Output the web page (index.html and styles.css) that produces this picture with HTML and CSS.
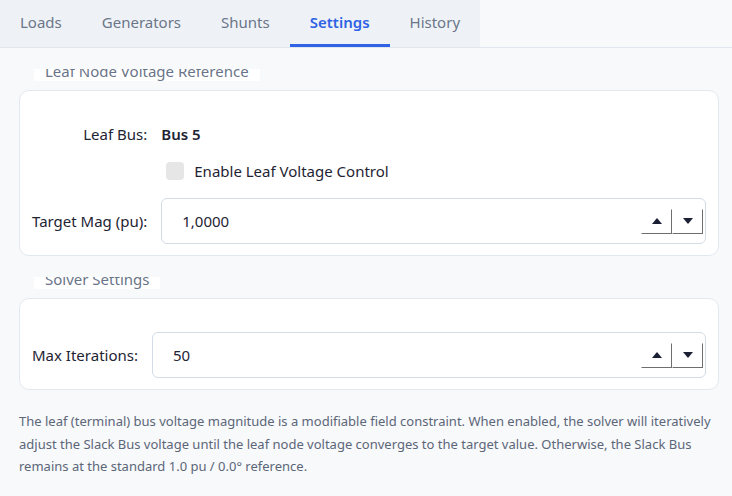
FILE: index.html
```html
<!DOCTYPE html>
<html lang="en">
<head>
    <meta charset="UTF-8">
    <title>Settings</title>
    <link rel="stylesheet" href="styles.css">
</head>
<body>
<div class="tabs-bar">
    <nav class="tabs">
        <a class="tab">Loads</a>
        <a class="tab">Generators</a>
        <a class="tab">Shunts</a>
        <a class="tab current">Settings</a>
        <a class="tab">History</a>
    </nav>
</div>

<div class="content">
    <section class="group">
        <div class="legend"><span>Leaf Node Voltage Reference</span></div>
        <div class="card">
            <div class="form-grid">
                <span class="label">Leaf Bus:</span>
                <strong class="value">Bus 5</strong>

                <span></span>
                <label class="check"><span class="box"></span>Enable Leaf Voltage Control</label>

                <span class="label">Target Mag (pu):</span>
                <div class="num-input">
                    <span class="num">1,0000</span>
                    <div class="spin">
                        <span class="btn"><svg width="10" height="6" viewBox="0 0 10 6"><polygon points="5,0 10,6 0,6"/></svg></span>
                        <span class="btn"><svg width="10" height="6" viewBox="0 0 10 6"><polygon points="0,0 10,0 5,6"/></svg></span>
                    </div>
                </div>
            </div>
        </div>
    </section>

    <section class="group">
        <div class="legend"><span>Solver Settings</span></div>
        <div class="card">
            <div class="form-grid">
                <span class="label">Max Iterations:</span>
                <div class="num-input">
                    <span class="num">50</span>
                    <div class="spin">
                        <span class="btn"><svg width="10" height="6" viewBox="0 0 10 6"><polygon points="5,0 10,6 0,6"/></svg></span>
                        <span class="btn"><svg width="10" height="6" viewBox="0 0 10 6"><polygon points="0,0 10,0 5,6"/></svg></span>
                    </div>
                </div>
            </div>
        </div>
    </section>

    <p class="note">The leaf (terminal) bus voltage magnitude is a modifiable field constraint. When enabled, the solver will iteratively adjust the Slack Bus voltage until the leaf node voltage converges to the target value. Otherwise, the Slack Bus remains at the standard 1.0 pu / 0.0° reference.</p>
</div>
</body>
</html>
```

FILE: styles.css
```css
*{
    margin: 0;
    padding: 0;
    box-sizing: border-box;
}
body{
    background-color: #f7f9fb;
    font-family: "Noto Sans", "Open Sans", sans-serif;
    color: #1e2433;
    width: 732px;
    height: 496px;
    overflow: hidden;
}
/* 顶部标签栏 */
.tabs-bar{
    border-bottom: 1px solid #e1e7ef;
}
.tabs{
    display: inline-flex;
    background-color: #eef2f7;
    height: 47px;
}
.tab{
    display: flex;
    align-items: center;
    padding: 0 20px;
    font-size: 15px;
    color: #6b7689;
    border-bottom: 3px solid transparent;
}
.tab.current{
    color: #2f62e4;
    font-weight: 600;
    border-bottom-color: #2f62e4;
}

.content{
    padding: 21px 13px 0 19px;
}
.group{
    display: flex;
    flex-direction: column;
    margin-bottom: 21px;
}
/* 图例只露出下半截，和原图一样 */
.legend{
    align-self: flex-start;
    margin-left: 15px;
    height: 12px;
    line-height: 4px;
    overflow: hidden;
    background-color: #ffffff;
    padding: 0 11px;
    font-size: 15px;
    color: #6a7488;
}
.card{
    margin-top: 9px;
    background-color: #ffffff;
    border: 1px solid #e2e8f0;
    border-radius: 10px;
    padding: 33px 12px 11px 12px;
}
.form-grid{
    display: grid;
    grid-template-columns: auto 1fr;
    column-gap: 14px;
    row-gap: 17px;
    align-items: center;
}
.label{
    text-align: right;
    font-size: 15px;
}
.value{
    font-size: 15px;
    font-weight: 600;
}
.check{
    display: flex;
    align-items: center;
    font-size: 15px;
}
.check .box{
    width: 18px;
    height: 18px;
    margin: 0 10px 0 5px;
    background-color: #e6e6e6;
    border-radius: 4px;
}
.num-input{
    display: flex;
    align-items: center;
    justify-content: space-between;
    height: 46px;
    border: 1px solid #d3dbe6;
    border-radius: 6px;
    padding: 0 2px 0 20px;
    font-size: 15px;
}
.spin{
    display: flex;
}
.spin .btn{
    display: flex;
    align-items: center;
    justify-content: center;
    width: 31px;
    height: 25px;
    border: 1px solid;
    border-color: #ffffff #6e6e6e #6e6e6e #ffffff;
}
.spin svg{
    fill: #1b1f33;
}
.note{
    font-size: 13px;
    line-height: 22.5px;
    color: #5c6678;
    margin-top: -1px;
}
```
